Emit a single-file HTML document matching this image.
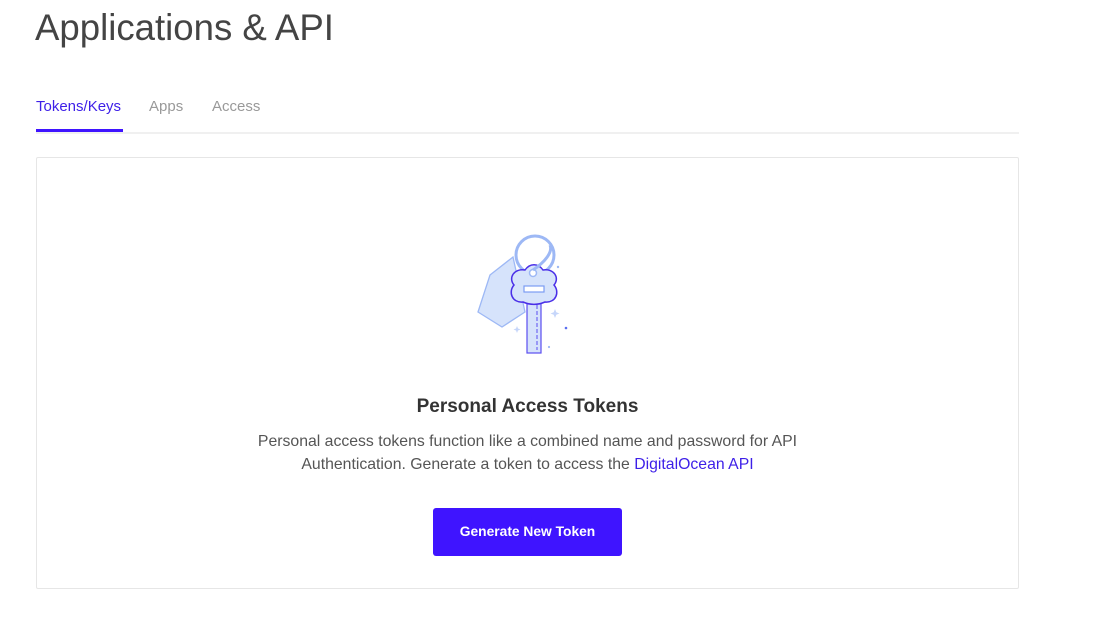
<!DOCTYPE html>
<html><head><meta charset="utf-8"><style>
html,body{margin:0;padding:0;background:#fff;width:1099px;height:618px;overflow:hidden;font-family:"Liberation Sans",sans-serif;}
h1{position:absolute;left:35px;top:7px;margin:0;font-weight:300;font-size:36.6px;color:#444;}
.tabs{position:absolute;left:36px;top:96px;width:983px;height:36px;border-bottom:2px solid #f0f0f0;}
.tab{position:absolute;top:2px;font-size:15px;color:#999}
.t1{left:0;color:#3d1fe8}
.ul{position:absolute;left:0;top:33px;width:87px;height:3px;background:#3f14ff}
.card{position:absolute;left:36px;top:157px;width:981px;height:430px;border:1px solid #e6e6e6;border-radius:2px}
h2{position:absolute;left:36px;width:983px;top:396px;margin:0;text-align:center;font-size:19px;color:#333;font-weight:bold}
p{position:absolute;left:0;width:1055px;top:430px;margin:0;text-align:center;font-size:15.8px;line-height:23px;color:#555}
p a{color:#3d1fe8;text-decoration:none}
.btn{position:absolute;left:433px;top:508px;width:189px;height:48px;background:#3f14ff;border-radius:3px;color:#fff;font-weight:bold;font-size:13.8px;text-align:center;line-height:48px}
</style></head><body>
<h1>Applications &amp; API</h1>
<div class="tabs"><span class="tab t1">Tokens/Keys</span><span class="tab" style="left:113px">Apps</span><span class="tab" style="left:176px">Access</span><div class="ul"></div></div>
<div class="card"></div>
<svg style="position:absolute;left:0;top:0" width="1099" height="618">
<polygon points="478,312 490,275 513,257 525,312 502,327" fill="#d6e3fb" stroke="#9db8f5" stroke-width="1.3"/>
<circle cx="535" cy="255" r="19" fill="none" stroke="#9db8f5" stroke-width="3"/>
<rect x="527" y="300" width="14" height="53" fill="#d6e3fb" stroke="#5a4ef0" stroke-width="1.2"/>
<line x1="537" y1="305" x2="537" y2="350" stroke="#5a4ef0" stroke-width="1" stroke-dasharray="4 2"/>
<path d="M525,270 C514,268 508,278 514,285 C508,292 512,303 523,302 C530,305 538,305 545,302 C556,303 560,292 554,285 C560,278 554,268 543,270 C538,263 530,263 525,270 Z" fill="#d6e3fb" stroke="#4a2fe8" stroke-width="1.5"/>
<rect x="524" y="286" width="20" height="6" fill="#fff" stroke="#7b9cf3" stroke-width="1.2"/>
<circle cx="533" cy="273" r="3.5" fill="#fff" stroke="#9db8f5" stroke-width="1.5"/>
<path d="M533,270 C545,262 553,252 550,245" fill="none" stroke="#9db8f5" stroke-width="3"/>
<circle cx="558" cy="267" r="1.2" fill="#9db8f5"/><circle cx="566" cy="328" r="1.3" fill="#5a6ef0"/><circle cx="549" cy="347" r="1.1" fill="#9db8f5"/>
<path d="M555,309 l1.3,3.2 3.2,1.3 -3.2,1.3 -1.3,3.2 -1.3,-3.2 -3.2,-1.3 3.2,-1.3z" fill="#c6d6fa"/>
<path d="M517,326 l1,2.5 2.5,1 -2.5,1 -1,2.5 -1,-2.5 -2.5,-1 2.5,-1z" fill="#c6d6fa"/>
</svg>
<h2>Personal Access Tokens</h2>
<p>Personal access tokens function like a combined name and password for API<br>Authentication. Generate a token to access the <a>DigitalOcean API</a></p>
<div class="btn">Generate New Token</div>
</body></html>
